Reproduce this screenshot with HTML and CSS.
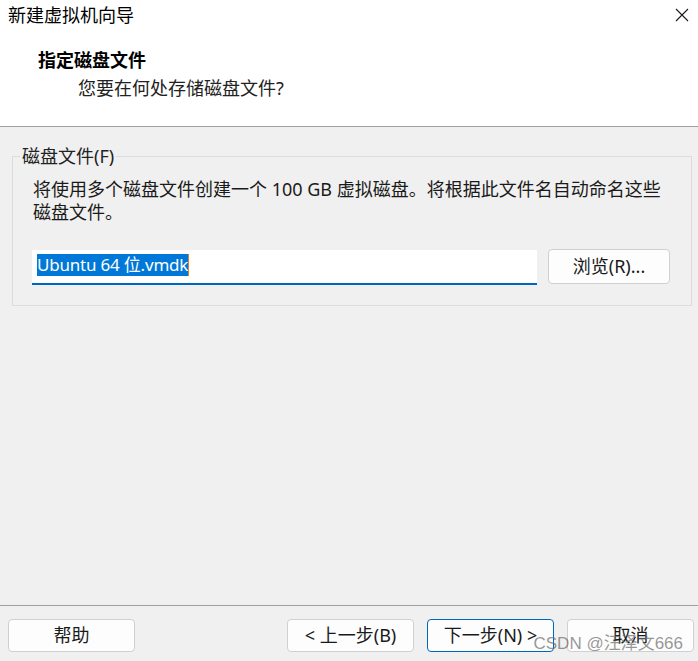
FILE: index.html
```html
<!DOCTYPE html>
<html lang="zh-CN">
<head>
<meta charset="utf-8">
<title>新建虚拟机向导</title>
<link rel="stylesheet" href="styles.css">
</head>
<body>
<div class="window">
  <header class="header">
    <div class="titlebar">
      <span class="title">新建虚拟机向导</span>
      <span class="close" aria-label="关闭">
        <svg width="14" height="14" viewBox="0 0 14 14"><path d="M1 1 L13 13 M13 1 L1 13" stroke="#1a1a1a" stroke-width="1.1" fill="none"/></svg>
      </span>
    </div>
    <div class="heading">指定磁盘文件</div>
    <div class="subheading">您要在何处存储磁盘文件?</div>
  </header>
  <main class="main">
    <fieldset class="group">
      <legend class="legend">磁盘文件(F)</legend>
      <p class="desc">将使用多个磁盘文件创建一个 100 GB 虚拟磁盘。将根据此文件名自动命名这些磁盘文件。</p>
      <div class="file-row">
        <div class="textbox"><span class="selected">Ubuntu 64 位.vmdk</span></div>
        <button class="btn browse">浏览(R)...</button>
      </div>
    </fieldset>
  </main>
  <footer class="footer">
    <button class="btn">帮助</button>
    <div class="nav">
      <button class="btn">&lt; 上一步(B)</button>
      <button class="btn primary">下一步(N) &gt;</button>
      <button class="btn">取消</button>
    </div>
    <div class="watermark">CSDN @汪泽文666</div>
  </footer>
</div>
</body>
</html>
```
FILE: styles.css
```css
* { box-sizing: border-box; }
html, body { margin: 0; padding: 0; }
body {
  width: 698px;
  height: 661px;
  overflow: hidden;
  background: #f0f0f0;
  font-family: "Noto Sans", "Noto Sans CJK SC", sans-serif;
  font-size: 18px;
  color: #1a1a1a;
}
.window {
  width: 698px;
  height: 661px;
  display: flex;
  flex-direction: column;
}
.header {
  background: #ffffff;
  height: 127px;
  border-bottom: 1px solid #a0a0a0;
  flex: none;
}
.titlebar {
  height: 30px;
  display: flex;
  align-items: center;
  justify-content: space-between;
  padding: 0 9px 0 8px;
}
.title { line-height: 30px; color: #000; }
.close { display: flex; width: 14px; height: 14px; }
.heading {
  margin-top: 16px;
  padding-left: 38px;
  line-height: 28px;
  font-weight: 700;
  color: #000;
}
.subheading {
  padding-left: 78px;
  line-height: 28px;
  color: #222;
}
.main {
  flex: 1;
  padding-top: 17px;
}
.group {
  margin: 0 6px 0 12px;
  padding: 10px 20px 20px 20px;
  border: 1px solid #dcdcdc;
  min-width: 0;
}
.legend {
  margin-left: -13px;
  padding: 0 2px;
  line-height: 24px;
  color: #222;
}
.desc {
  margin: 0;
  line-height: 23px;
  color: #1a1a1a;
}
.file-row {
  margin-top: 26px;
  margin-left: -1px;
  display: flex;
  gap: 11px;
}
.textbox {
  width: 505px;
  height: 35px;
  background: #ffffff;
  border-bottom: 2px solid #0067c0;
  padding: 3px 5px 0 5px;
  font-size: 17px;
}
.selected {
  display: inline-block;
  line-height: 22px;
  background: #0078d7;
  color: #ffffff;
  letter-spacing: -0.2px;
  border-right: 1px solid #e0802a;
}
.btn {
  font-family: "Noto Sans", "Noto Sans CJK SC", sans-serif;
  font-size: 18px;
  color: #1a1a1a;
  width: 127px;
  height: 33px;
  background: #fdfdfd;
  border: 1px solid #d0d0d0;
  border-radius: 4px;
  padding: 0;
  line-height: 31px;
}
.browse {
  width: 122px;
  height: 35px;
  margin-top: -1px;
}
.footer {
  flex: none;
  height: 56px;
  border-top: 1px solid #a0a0a0;
  padding: 13px 4px 0 8px;
  display: flex;
  justify-content: space-between;
  align-items: flex-start;
  position: relative;
}
.nav {
  display: flex;
  gap: 13px;
}
.primary {
  border-color: #0067c0;
}
.watermark {
  position: absolute;
  right: 15px;
  top: 26px;
  font-family: "Liberation Sans", Arial, "Noto Sans CJK SC", sans-serif;
  font-size: 17px;
  line-height: 24px;
  color: rgba(110, 110, 110, 0.72);
  pointer-events: none;
}
```
